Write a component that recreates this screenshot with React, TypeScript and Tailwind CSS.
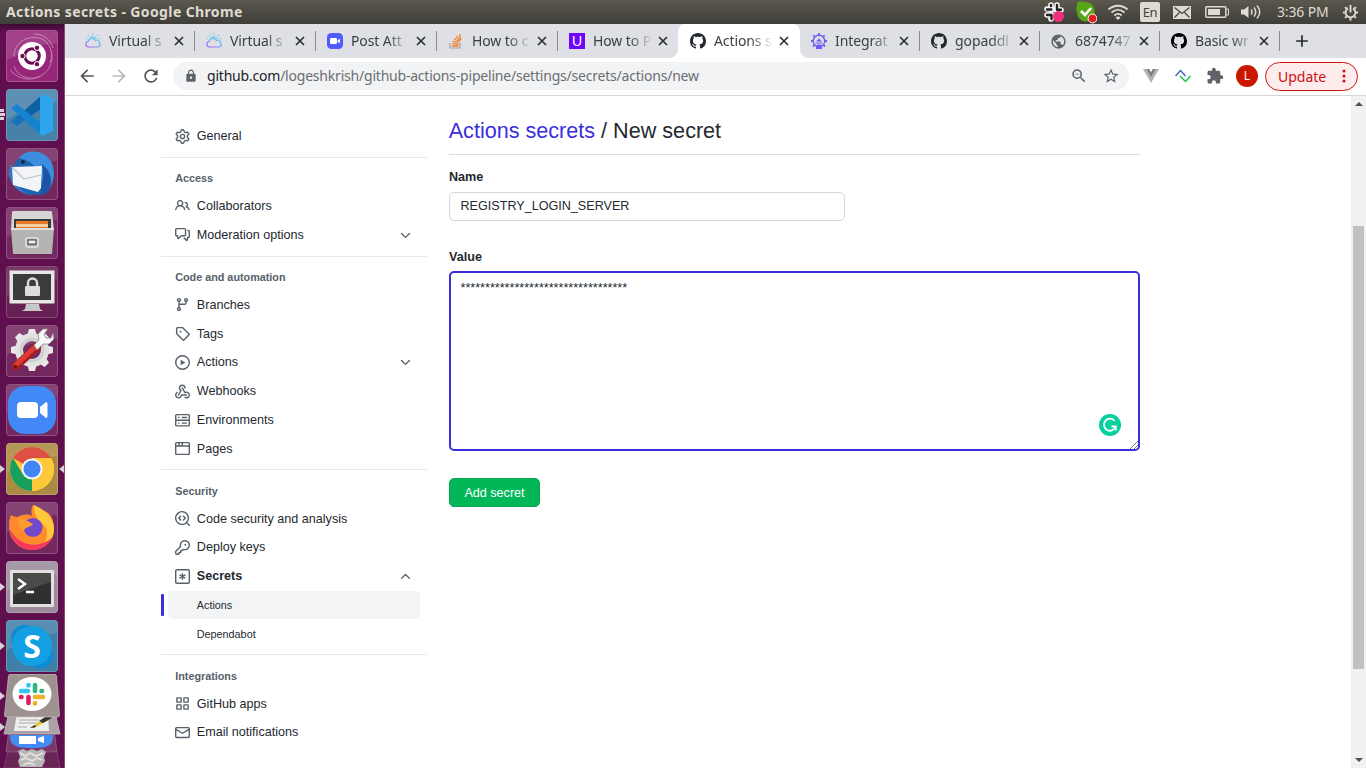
import type { ReactNode } from "react";
import {
  MdArrowBack,
  MdArrowForward,
  MdRefresh,
  MdLock,
  MdStarBorder,
  MdExtension,
  MdZoomOut,
  MdPublic,
  MdAdd,
} from "react-icons/md";

const octicons: Record<string, string> = {
  gear: "M8 0a8.2 8.2 0 0 1 .701.031C9.444.095 9.99.645 10.16 1.29l.288 1.107c.018.066.079.158.212.224.231.114.454.243.668.386.123.082.233.09.299.071l1.103-.303c.644-.176 1.392.021 1.82.63.27.385.506.792.704 1.218.315.675.111 1.422-.364 1.891l-.814.806c-.049.048-.098.147-.088.294.016.257.016.515 0 .772-.01.147.038.246.088.294l.814.806c.475.469.679 1.216.364 1.891a7.977 7.977 0 0 1-.704 1.217c-.428.61-1.176.807-1.82.63l-1.102-.302c-.067-.019-.177-.011-.3.071a5.909 5.909 0 0 1-.668.386c-.133.066-.194.158-.211.224l-.29 1.106c-.168.646-.715 1.196-1.458 1.26a8.006 8.006 0 0 1-1.402 0c-.743-.064-1.289-.614-1.458-1.26l-.289-1.106c-.018-.066-.079-.158-.212-.224a5.738 5.738 0 0 1-.668-.386c-.123-.082-.233-.09-.299-.071l-1.103.303c-.644.176-1.392-.021-1.82-.63a8.12 8.12 0 0 1-.704-1.218c-.315-.675-.111-1.422.363-1.891l.815-.806c.05-.048.098-.147.088-.294a6.214 6.214 0 0 1 0-.772c.01-.147-.038-.246-.088-.294l-.815-.806C.635 6.045.431 5.298.746 4.623a7.92 7.92 0 0 1 .704-1.217c.428-.61 1.176-.807 1.82-.63l1.102.302c.067.019.177.011.3-.071.214-.143.437-.272.668-.386.133-.066.194-.158.211-.224l.29-1.106C6.009.645 6.556.095 7.299.03 7.53.01 7.764 0 8 0Zm-.571 1.525c-.036.003-.108.036-.137.146l-.289 1.105c-.147.561-.549.967-.998 1.189-.173.086-.34.183-.5.29-.417.278-.97.423-1.529.27l-1.103-.303c-.109-.03-.175.016-.195.045-.22.312-.412.644-.573.99-.014.031-.021.11.059.19l.815.806c.411.406.562.957.53 1.456a4.709 4.709 0 0 0 0 .582c.032.499-.119 1.05-.53 1.456l-.815.806c-.081.08-.073.159-.059.19.162.346.353.677.573.989.02.03.085.076.195.046l1.102-.303c.56-.153 1.113-.008 1.53.27.161.107.328.204.501.29.447.222.85.629.997 1.189l.289 1.105c.029.109.101.143.137.146a6.6 6.6 0 0 0 1.142 0c.036-.003.108-.036.137-.146l.289-1.105c.147-.561.549-.967.998-1.189.173-.086.34-.183.5-.29.417-.278.97-.423 1.529-.27l1.103.303c.109.029.175-.016.195-.045.22-.313.411-.644.573-.99.014-.031.021-.11-.059-.19l-.815-.806c-.411-.406-.562-.957-.53-1.456a4.709 4.709 0 0 0 0-.582c-.032-.499.119-1.05.53-1.456l.815-.806c.081-.08.073-.159.059-.19a6.464 6.464 0 0 0-.573-.989c-.02-.03-.085-.076-.195-.046l-1.102.303c-.56.153-1.113.008-1.53-.27a4.44 4.44 0 0 0-.501-.29c-.447-.222-.85-.629-.997-1.189l-.289-1.105c-.029-.11-.101-.143-.137-.146a6.6 6.6 0 0 0-1.142 0ZM11 8a3 3 0 1 1-6 0 3 3 0 0 1 6 0ZM9.5 8a1.5 1.5 0 1 0-3.001.001A1.5 1.5 0 0 0 9.5 8Z",
  people:
    "M2 5.5a3.5 3.5 0 1 1 5.898 2.549 5.508 5.508 0 0 1 3.034 4.084.75.75 0 1 1-1.482.235 4 4 0 0 0-7.9 0 .75.75 0 0 1-1.482-.236A5.507 5.507 0 0 1 3.102 8.05 3.493 3.493 0 0 1 2 5.5ZM11 4a3.001 3.001 0 0 1 2.22 5.018 5.01 5.01 0 0 1 2.56 3.012.749.749 0 0 1-.885.954.752.752 0 0 1-.549-.514 3.507 3.507 0 0 0-2.522-2.372.75.75 0 0 1-.574-.73v-.352a.75.75 0 0 1 .416-.672A1.5 1.5 0 0 0 11 5.5.75.75 0 0 1 11 4Zm-5.5-.5a2 2 0 1 0-.001 3.999A2 2 0 0 0 5.5 3.5Z",
  discussion:
    "M1.75 1h8.5c.966 0 1.75.784 1.75 1.75v5.5A1.75 1.75 0 0 1 10.25 10H7.061l-2.574 2.573A1.458 1.458 0 0 1 2 11.543V10h-.25A1.75 1.75 0 0 1 0 8.25v-5.5C0 1.784.784 1 1.75 1ZM1.5 2.75v5.5c0 .138.112.25.25.25h1a.75.75 0 0 1 .75.75v2.19l2.72-2.72a.749.749 0 0 1 .53-.22h3.5a.25.25 0 0 0 .25-.25v-5.5a.25.25 0 0 0-.25-.25h-8.5a.25.25 0 0 0-.25.25Zm13 2a.25.25 0 0 0-.25-.25h-.5a.75.75 0 0 1 0-1.5h.5c.966 0 1.75.784 1.75 1.75v5.5A1.75 1.75 0 0 1 14.25 12H14v1.543a1.458 1.458 0 0 1-2.487 1.03L9.22 12.28a.749.749 0 0 1 .326-1.275.749.749 0 0 1 .734.215l2.22 2.22v-2.19a.75.75 0 0 1 .75-.75h1a.25.25 0 0 0 .25-.25Z",
  branch:
    "M9.5 3.25a2.25 2.25 0 1 1 3 2.122V6A2.5 2.5 0 0 1 10 8.5H6a1 1 0 0 0-1 1v1.128a2.251 2.251 0 1 1-1.5 0V5.372a2.25 2.25 0 1 1 1.5 0v1.836A2.493 2.493 0 0 1 6 7h4a1 1 0 0 0 1-1v-.628A2.25 2.25 0 0 1 9.5 3.25Zm-6 0a.75.75 0 1 0 1.5 0 .75.75 0 0 0-1.5 0Zm8.25-.75a.75.75 0 1 0 0 1.5.75.75 0 0 0 0-1.5ZM4.25 12a.75.75 0 1 0 0 1.5.75.75 0 0 0 0-1.5Z",
  tag: "M1 7.775V2.75C1 1.784 1.784 1 2.75 1h5.025c.464 0 .91.184 1.238.513l6.25 6.25a1.75 1.75 0 0 1 0 2.474l-5.026 5.026a1.75 1.75 0 0 1-2.474 0l-6.25-6.25A1.752 1.752 0 0 1 1 7.775Zm1.5 0c0 .066.026.13.073.177l6.25 6.25a.25.25 0 0 0 .354 0l5.025-5.025a.25.25 0 0 0 0-.354l-6.25-6.25a.25.25 0 0 0-.177-.073H2.75a.25.25 0 0 0-.25.25ZM6 5a1 1 0 1 1 0 2 1 1 0 0 1 0-2Z",
  play: "M8 0a8 8 0 1 1 0 16A8 8 0 0 1 8 0ZM1.5 8a6.5 6.5 0 1 0 13 0 6.5 6.5 0 0 0-13 0Zm4.879-2.773 4.264 2.559a.25.25 0 0 1 0 .428l-4.264 2.559A.25.25 0 0 1 6 10.559V5.442a.25.25 0 0 1 .379-.215Z",
  webhook:
    "M5.5 4.25a2.25 2.25 0 0 1 4.5 0 .75.75 0 0 0 1.5 0 3.75 3.75 0 1 0-6.14 2.889l-2.272 4.258a.75.75 0 0 0 1.324.706L7 7.25a.75.75 0 0 0-.309-1.015A2.25 2.25 0 0 1 5.5 4.25Z M7.364 3.607a.75.75 0 0 1 1.03.257l2.608 4.349a3.75 3.75 0 1 1-.628 6.785.75.75 0 0 1 .752-1.299 2.25 2.25 0 1 0-.033-3.88.75.75 0 0 1-1.03-.256L7.107 4.636a.75.75 0 0 1 .257-1.03Z M2.9 8.776A.75.75 0 0 1 2.625 9.8 2.25 2.25 0 1 0 6 11.75a.75.75 0 0 1 .75-.751h5.5a.75.75 0 0 1 0 1.5H7.425a3.751 3.751 0 1 1-5.55-3.998.75.75 0 0 1 1.024.274Z",
  server:
    "M1.75 1h12.5c.966 0 1.75.784 1.75 1.75v4c0 .372-.116.717-.314 1 .198.283.314.628.314 1v4a1.75 1.75 0 0 1-1.75 1.75H1.75A1.75 1.75 0 0 1 0 12.75v-4c0-.358.109-.707.314-1a1.739 1.739 0 0 1-.314-1v-4C0 1.784.784 1 1.75 1ZM1.5 2.75v4c0 .138.112.25.25.25h12.5a.25.25 0 0 0 .25-.25v-4a.25.25 0 0 0-.25-.25H1.75a.25.25 0 0 0-.25.25Zm.25 5.75a.25.25 0 0 0-.25.25v4c0 .138.112.25.25.25h12.5a.25.25 0 0 0 .25-.25v-4a.25.25 0 0 0-.25-.25ZM7 4.75A.75.75 0 0 1 7.75 4h4.5a.75.75 0 0 1 0 1.5h-4.5A.75.75 0 0 1 7 4.75ZM7.75 10h4.5a.75.75 0 0 1 0 1.5h-4.5a.75.75 0 0 1 0-1.5ZM3 4.75A.75.75 0 0 1 3.75 4h.5a.75.75 0 0 1 0 1.5h-.5A.75.75 0 0 1 3 4.75ZM3.75 10h.5a.75.75 0 0 1 0 1.5h-.5a.75.75 0 0 1 0-1.5Z",
  browser:
    "M0 2.75C0 1.784.784 1 1.75 1h12.5c.966 0 1.75.784 1.75 1.75v10.5A1.75 1.75 0 0 1 14.25 15H1.75A1.75 1.75 0 0 1 0 13.25ZM14.5 6h-13v7.25c0 .138.112.25.25.25h12.5a.25.25 0 0 0 .25-.25Zm-6-3.5v2h6V2.75a.25.25 0 0 0-.25-.25ZM5 2.5v2h2v-2Zm-3.25 0a.25.25 0 0 0-.25.25V4.5h2v-2Z",
  codescan:
    "M8.47 4.97a.75.75 0 0 0 0 1.06L9.94 7.5 8.47 8.97a.75.75 0 1 0 1.06 1.06l2-2a.75.75 0 0 0 0-1.06l-2-2a.75.75 0 0 0-1.06 0ZM6.53 6.03a.75.75 0 0 0-1.06-1.06l-2 2a.75.75 0 0 0 0 1.06l2 2a.75.75 0 1 0 1.06-1.06L5.06 7.5l1.47-1.47Z M12.246 13.307a7.501 7.501 0 1 1 1.06-1.06l2.474 2.473a.749.749 0 1 1-1.06 1.06ZM1.5 7.5a6.002 6.002 0 0 0 3.608 5.504 6.002 6.002 0 0 0 6.486-1.117.748.748 0 0 1 .292-.293A6 6 0 1 0 1.5 7.5Z",
  key: "M10.5 0a5.499 5.499 0 1 1-1.288 10.848l-.932.932a.749.749 0 0 1-.53.22H7v.75a.749.749 0 0 1-.22.53l-.5.5a.749.749 0 0 1-.53.22H5v.75a.749.749 0 0 1-.22.53l-.5.5a.749.749 0 0 1-.53.22h-2A1.75 1.75 0 0 1 0 14.25v-2c0-.199.079-.389.22-.53l4.932-4.932A5.5 5.5 0 0 1 10.5 0Zm-4 5.5c-.001.431.069.86.205 1.269a.75.75 0 0 1-.181.768L1.5 12.56v1.69c0 .138.112.25.25.25h1.69l.06-.06v-1.19a.75.75 0 0 1 .75-.75h1.19l.06-.06v-1.19a.75.75 0 0 1 .75-.75h1.19l1.023-1.025a.75.75 0 0 1 .768-.18A4 4 0 1 0 6.5 5.5ZM11 6a1 1 0 1 1 0-2 1 1 0 0 1 0 2Z",
  mail: "M1.75 2h12.5c.966 0 1.75.784 1.75 1.75v8.5A1.75 1.75 0 0 1 14.25 14H1.75A1.75 1.75 0 0 1 0 12.25v-8.5C0 2.784.784 2 1.75 2ZM1.5 12.251c0 .138.112.25.25.25h12.5a.25.25 0 0 0 .25-.25V5.809L8.38 9.397a.75.75 0 0 1-.76 0L1.5 5.809v6.442Zm13-8.181v-.32a.25.25 0 0 0-.25-.25H1.75a.25.25 0 0 0-.25.25v.32L8 7.88Z",
  down: "M12.78 5.22a.749.749 0 0 1 0 1.06l-4.25 4.25a.749.749 0 0 1-1.06 0L3.22 6.28a.749.749 0 1 1 1.06-1.06L8 8.939l3.72-3.719a.749.749 0 0 1 1.06 0Z",
  up: "M3.22 10.53a.749.749 0 0 1 0-1.06l4.25-4.25a.749.749 0 0 1 1.06 0l4.25 4.25a.749.749 0 1 1-1.06 1.06L8 6.811 4.28 10.53a.749.749 0 0 1-1.06 0Z",
};

function Octicon({ name }: { name: string }) {
  return (
    <svg viewBox="0 0 16 16" className="size-[15px] shrink-0 fill-[#57606a]">
      {name === "asterisk" ? (
        <g fill="none" stroke="#57606a" strokeWidth="1.5" strokeLinecap="round">
          <rect x=".75" y=".75" width="14.5" height="14.5" rx="1.2" />
          <path d="M8 5v6M5.4 6.5l5.2 3M10.6 6.5l-5.2 3" />
        </g>
      ) : name === "apps" ? (
        <g fill="none" stroke="#57606a" strokeWidth="1.5">
          <rect x="2" y="2" width="4.500" height="4.500" rx=".5" />
          <rect x="9.500" y="2" width="4.500" height="4.500" rx=".5" />
          <rect x="2" y="9.500" width="4.500" height="4.500" rx=".5" />
          <rect x="9.500" y="9.500" width="4.500" height="4.500" rx=".5" />
        </g>
      ) : (
        <path d={octicons[name]} />
      )}
    </svg>
  );
}

/* ---------- Desktop panel ---------- */

function TopPanel() {
  return (
    <header className="flex h-6 shrink-0 items-center bg-linear-to-b from-[#5b584d] to-[#3e3d38] pr-[7px] pl-[6px] font-['Noto_Sans',sans-serif] text-[#dfdbd2]">
      <span className="text-[14px] font-bold leading-6 tracking-[0.38px]">Actions secrets - Google Chrome</span>
      <div className="ml-auto flex items-center">
        <svg viewBox="0 0 22 22" className="mr-2.5 size-[22px]">
          <g strokeLinecap="round" strokeWidth="5.6" stroke="#f4f4f4">
            <path d="M8 4v5M14 4v4M4 8h5M13 9h5M4 14h5M8 14v4M14 13v4" />
          </g>
          <g strokeLinecap="round" strokeWidth="2.4" stroke="#222">
            <path d="M8 4v1M14 4v4M4 8.500h4.300M14 8.800h4M4 14h4M8.500 14v4" />
          </g>
          <circle cx="15.500" cy="15.500" r="5.500" fill="#ef2f7b" />
        </svg>
        <svg viewBox="0 0 22 24" className="mr-2.5 h-6 w-[22px]">
          <path d="M2 6C1 2 5 0 8 2c5-1 10 2 11 6 1 3 0 4 1 6 2 5-2 9-6 7C7 23 2 18 2 12c-1-2-1-4 0-6Z" fill="#57a515" />
          <path d="m6 11 4 4 6-7" fill="none" stroke="#fff" strokeWidth="2.600" />
          <circle cx="17.500" cy="18.500" r="4.400" fill="#e11c1c" stroke="#fff" strokeWidth="1" />
        </svg>
        <svg viewBox="0 0 22 18" className="mr-[11px] h-[18px] w-[22px]" fill="none" stroke="#dfdbd2" strokeWidth="1.800">
          <path d="M1.500 6.500c5.500-5 13.500-5 19 0" />
          <path d="M4.500 9.500c4-3.600 9-3.600 13 0" />
          <path d="M7.300 12.500c2.300-2 5.100-2 7.400 0" />
          <path d="m11 17-2.500-2.600c1.500-1.300 3.500-1.300 5 0Z" fill="#dfdbd2" stroke="none" />
        </svg>
        <span className="mr-[13px] flex h-5 w-5 items-center justify-center rounded-[2px] bg-[#dfdbd2] pt-px text-[13px] tracking-[-0.3px] text-[#45443f]">
          En
        </span>
        <svg viewBox="0 0 18 13" className="mr-[14px] h-[13px] w-[18px]">
          <rect width="18" height="13" fill="#dfdbd2" />
          <path d="m1.500 1.500 7.500 6 7.500-6M1.500 11.500l5-5M16.500 11.500l-5-5" fill="none" stroke="#45443f" strokeWidth="1.300" />
        </svg>
        <svg viewBox="0 0 24 12" className="mr-3 h-3 w-6">
          <rect x=".8" y=".8" width="20" height="10.400" rx="1" fill="none" stroke="#dfdbd2" strokeWidth="1.500" />
          <rect x="3" y="3" width="12" height="6" fill="#dfdbd2" />
          <path d="M21.500 3h2v6h-2" fill="none" stroke="#dfdbd2" />
        </svg>
        <svg viewBox="0 0 20 16" className="mr-4 h-4 w-5">
          <path d="M0 5.500h3L7.500 2v12L3 10.500H0Z" fill="#dfdbd2" />
          <path d="M10 5.500q2 2.500 0 5M13 3.500q3.500 4.500 0 9M16 1.500q5.500 6.500 0 13" fill="none" stroke="#dfdbd2" strokeWidth="1.500" />
        </svg>
        <span className="mr-3 w-[53px] whitespace-nowrap text-[14px] leading-6 tracking-[-0.15px]">3:36 PM</span>
        <svg viewBox="0 0 18 18" className="size-[17px]" fill="none" stroke="#dfdbd2">
          <path d="M6.300 4.600a5.200 5.200 0 1 0 5.400 0" strokeWidth="2" />
          <path d="M9 1v8" strokeWidth="2" />
          <path d="M1 9h2M15 9h2M3.300 3.300l1.500 1.500M14.700 3.300l-1.500 1.500M3.300 14.700l1.500-1.500M14.700 14.700l-1.500-1.500M9 15v2.500" strokeWidth="2.200" />
        </svg>
      </div>
    </header>
  );
}

/* ---------- Launcher ---------- */

function Tile({ tint, pips, focused, children }: { tint: string; pips?: number; focused?: boolean; children: ReactNode }) {
  return (
    <div className="relative mb-[7px] flex h-[52px] w-[65px] shrink-0 pl-[6px]">
      <div className={`h-[52px] w-[52px] overflow-hidden rounded-[4px] border border-white/20 ${tint}`}>
        <svg viewBox="1 1 50 50" className="size-[50px]">
          <path d="M1 1h50v12Q26 15 1 30Z" fill="#fff" opacity=".12" />
          {children}
        </svg>
      </div>
      {pips === 1 && <span className="absolute top-[22px] left-0 border-y-4 border-l-[5px] border-y-transparent border-l-[#d9cfd6]" />}
      {pips === 3 && (
        <span className="absolute top-[20px] left-0 flex flex-col gap-px">
          <i className="h-[3px] w-[4px] bg-[#d9cfd6]" />
          <i className="h-[3px] w-[5px] bg-[#d9cfd6]" />
          <i className="h-[3px] w-[4px] bg-[#d9cfd6]" />
        </span>
      )}
      {focused && <span className="absolute top-[22px] right-px border-y-4 border-r-[5px] border-y-transparent border-r-[#d9cfd6]" />}
    </div>
  );
}

function Launcher() {
  const teeth = [0, 45, 90, 135, 180, 225, 270, 315];
  return (
    <aside className="flex w-[65px] shrink-0 flex-col overflow-hidden border-r border-[#8b4a7a] bg-linear-to-b from-[#3d0a31] from-0% via-[#5f0f4d] via-1% to-[#5f0f4d] pt-[6px]">
      <Tile tint="bg-[#962779]">
        <g fill="none" stroke="#fff" opacity=".4">
          <path d="M8 27C8 12 22 4 36 9c8 4 12 14 8 24" />
          <path d="M45 20c4 12-4 26-16 28C19 49 11 45 8 36" />
          <path d="M28 4c10 0 17 6 19 14M4 40c8 9 20 12 30 6" />
        </g>
        <circle cx="26" cy="26" r="14" fill="#fff" />
        <circle cx="26" cy="26" r="7.300" fill="none" stroke="#6d0d4f" strokeWidth="3" />
        <g fill="#6d0d4f" stroke="#fff" strokeWidth="1">
          <circle cx="16.500" cy="26" r="2.700" />
          <circle cx="31" cy="17.800" r="2.700" />
          <circle cx="31" cy="34.200" r="2.700" />
        </g>
      </Tile>
      <Tile tint="bg-[#4781a8]" pips={3}>
        <path d="m5 33 31-27 2 12L11 36Z" fill="#0c62a3" />
        <path d="m5 19 6-4 27 22-2 10Z" fill="#1683cf" />
        <path d="m5 33 6 4 7-6-6-5Z" fill="#1374bb" />
        <path d="M36 5 47 10v32l-11 5-2-2V7Z" fill="#2ea3ee" />
      </Tile>
      <Tile tint="bg-[#73295f]">
        <circle cx="27" cy="26" r="21" fill="#1d62b3" />
        <path d="M13 10C20 0 38 2 44 12c6 9 5 22-2 31l-8 4c6-8 3-20-4-27C25 13 18 11 13 10Z" fill="#3c8de0" />
        <path d="M4 17c-4 12 3 24 14 28l8 3C11 42 5 28 6 17Z" fill="#2f78cb" />
        <path d="m6 19 30-1-1 22-3 4-25-7Z" fill="#f3f4f6" />
        <path d="m6 19 12 12 17-4" fill="none" stroke="#bfc4cc" strokeWidth="1.200" />
        <path d="M36 16c11 9 11 20 5 29l-8 3c4-9 5-20 3-32Z" fill="#1d55a5" />
        <circle cx="17" cy="14" r="2" fill="#1b2b3c" />
      </Tile>
      <Tile tint="bg-[#73295f]">
        <path d="M6 5q0-1 2-1h36q2 0 2 1l2 18H5Z" fill="#d6d6d4" />
        <rect x="8" y="12" width="37" height="10" fill="#3a3a38" />
        <path d="M10 14h32v8H10Z" fill="#e7792a" />
        <path d="M10 17h32v3H10Z" fill="#f4d0a1" />
        <path d="M5 21h43l-2 26H7Z" fill="#b4b4b2" />
        <path d="M5 21h43v2H5Z" fill="#dededc" />
        <rect x="20" y="31" width="12" height="9" rx="2" fill="#a0a09e" stroke="#e4e4e2" strokeWidth="1.500" />
        <rect x="22" y="33" width="8" height="4" fill="#ededeb" stroke="#444" strokeWidth="1" />
      </Tile>
      <Tile tint="bg-[#662054]">
        <rect x="3.500" y="4.500" width="45" height="33" fill="#e6e6e4" />
        <rect x="7" y="8" width="38" height="26" fill="#3b3b3b" />
        <path d="M20 38h13l1 5 3 2H16l3-2Z" fill="#c7c7c5" />
        <rect x="19" y="20" width="15" height="10" rx="1" fill="#dcdcda" />
        <path d="M22 21v-4a4.500 4.500 0 0 1 9 0v4" fill="none" stroke="#dcdcda" strokeWidth="2.400" />
      </Tile>
      <Tile tint="bg-[#73295f]">
        <g fill="#e9e9e9">
          {teeth.map((a) => (
            <path key={a} d="m21.500 10 1.500-6h6l1.500 6Z" transform={`rotate(${a} 26 25)`} />
          ))}
        </g>
        <circle cx="26" cy="25" r="13" fill="none" stroke="#e2e2e2" strokeWidth="8" />
        <circle cx="26" cy="25" r="11" fill="none" stroke="#cfcfcf" strokeWidth="3" />
        <path d="m10 41 21-19" stroke="#a81d1d" strokeWidth="8" strokeLinecap="round" />
        <path d="m10 40 20-19" stroke="#dc3c36" strokeWidth="5" strokeLinecap="round" />
        <path d="m28 20 5-5-1-6 5-5 5 0-4 5 2 4 5 0 2-5 1 6-5 5-6 0-6 6Z" fill="#f8f8f8" stroke="#888" strokeWidth=".8" />
        <circle cx="9.500" cy="41.500" r="1.800" fill="#6e1414" />
      </Tile>
      <Tile tint="bg-[#73295f]">
        <rect x="2" y="2" width="48" height="48" rx="17" fill="#4288f6" />
        <rect x="11" y="18" width="21" height="16" rx="4" fill="#fff" />
        <path d="m34 23 6-5q1.500 0 1.500 2v12q0 2-1.500 2l-6-5Z" fill="#fff" />
      </Tile>
      <Tile tint="bg-[#ab8a43]" pips={1} focused>
        <circle cx="26" cy="26" r="22" fill="#fdc93a" />
        <path d="M26 26 6.950 15A22 22 0 0 1 45.050 15H26Z" fill="#dd5144" />
        <path d="M26 26 26 48A22 22 0 0 1 6.950 15L17 31.500Z" fill="#17a05d" />
        <path d="M26 26 35.500 31.500 26 48A22 22 0 0 0 45.050 15H26Z" fill="#fdc93a" />
        <circle cx="26" cy="26" r="10.500" fill="#f3f3f3" />
        <circle cx="26" cy="26" r="8.500" fill="#4385f3" />
      </Tile>
      <Tile tint="bg-[#73295f]">
        <path d="M5 13C2 20 3 29 5 34c4 9 12 14 21 14 12 0 22-9 22-21 0-9-3-14-7-17-6-2-10-4-14-7-2 4-2 7-1 11-5-3-11-1-14 1-3 0-5-1-7-2Z" fill="#ff8a2c" />
        <path d="M28 3c9 4 20 11 20 24 0 12-9 19-20 19 12-2 15-12 12-20-2-5-13-8-12-23Z" fill="#ffc93c" />
        <path d="M4 27C6 43 17 48 27 48c9 0 17-6 19-13-9 10-31 13-42-8Z" fill="#f8385c" />
        <circle cx="27" cy="25.500" r="9.500" fill="#7248cc" />
        <path d="M12 15c4 3 8 2 15 7-3 4-8 2-9 7-4-2-7-8-6-14Z" fill="#ff9c2e" />
      </Tile>
      <Tile tint="bg-[#9d8b9b]" pips={1}>
        <rect x="4" y="9" width="44" height="37" rx="1" fill="#e1e1df" />
        <rect x="7" y="12" width="38" height="31" fill="#302f31" />
        <path d="M7 12h38v9L7 34Z" fill="#4b4a4b" />
        <path d="m12 18 7 5-7 5M20 31h8" fill="none" stroke="#fff" strokeWidth="2.400" />
      </Tile>
      <Tile tint="bg-[#407fa8]" pips={1}>
        <circle cx="19" cy="19" r="14" fill="#0d8bd3" />
        <circle cx="34" cy="35" r="13.500" fill="#0d8bd3" />
        <circle cx="26" cy="26" r="20" fill="#149fe3" />
        <text x="26" y="37.500" textAnchor="middle" fill="#fff" className="font-['Noto_Sans',sans-serif] text-[32px] font-bold">
          S
        </text>
      </Tile>
      <svg viewBox="0 674 64 94" className="-mt-[5px] h-[94px] w-16 shrink-0">
        <path d="M9 730h45l3 22H6Z" fill="#7b3769" stroke="#a0708f" strokeWidth=".7" />
        <path d="M10 735h43c1 12-8 13-21 13s-23-1-22-13Z" fill="#438cf3" />
        <path d="M19 736h17v8H19ZM38 738l6-2v7l-6-2Z" fill="#fff" />
        <path d="M8 752h49l3 16H4Z" fill="#692456" stroke="#8d4d7d" strokeWidth=".7" />
        <path d="m18 751 5-2 4 2 5-2 5 2 5-2 4 3-2 5 1 4-3 6H20l-2-6 2-4Z" fill="#b9b8b6" />
        <path d="m20 753 5 3 5-3 6 3 7-3M21 760l5-2 6 3 5-3 5 2M23 765l6-2 6 2" fill="none" stroke="#e4e4e2" strokeWidth="1.800" />
        <path d="M9 712h46l5 22H4Z" fill="#aaa0a5" stroke="#d0c7cc" strokeWidth=".7" />
        <path d="M17 712h31l1 19H14Z" fill="#eee" />
        <path d="M19 720h20M19 723h18M18 727h9" stroke="#aaa" />
        <path d="m30 728 16-11 5 2-17 9Z" fill="#e4c339" />
        <path d="m39 721 9-6 4 3-9 5Z" fill="#333" />
        <path d="m30 728 5-3 1 2Z" fill="#222" />
        <path d="M11 674h43q2 0 2.500 2l3 39q0 2-2 2H7q-3 0-2.500-2l4-39q.5-2 2.500-2Z" fill="#9d9290" stroke="#c9c1c0" strokeWidth=".7" />
        <ellipse cx="32" cy="694" rx="19.500" ry="17" fill="#fff" />
        <g strokeWidth="4.600" strokeLinecap="round">
          <path d="M21 691h7M28.500 685v.5" stroke="#36c5f0" />
          <path d="M35 685v6M41.500 691h.5" stroke="#2eb67d" />
          <path d="M35 697h8M35 703v.5" stroke="#ecb22e" />
          <path d="M28.500 697v6M21 697h.5" stroke="#e01e5a" />
        </g>
        <path d="m0 692 5 4-5 4ZM0 723l5 4-5 4Z" fill="#d9cfd6" />
      </svg>
    </aside>
  );
}

/* ---------- Browser ---------- */

function Cloud() {
  return (
    <svg viewBox="0 0 16 16" className="size-4" fill="none" strokeWidth="1.200">
      <defs>
        <linearGradient id="cloud" x1="0" y1="1" x2="1" y2="0">
          <stop offset="0" stopColor="#b455f5" />
          <stop offset=".5" stopColor="#6fa4fb" />
          <stop offset="1" stopColor="#53d5e8" />
        </linearGradient>
      </defs>
      <path d="M3.500 14A2.800 2.800 0 0 1 3 8.500C4 5 9 4 10.500 7.500 13 6 15 8.500 14 10c2 1 1.500 4-1 4Z" stroke="url(#cloud)" />
      <path d="M4.500 5.500a4 4 0 0 1 7 .5M8 0v1.500M3 2l1 1.200M13 2l-1 1.200M.8 5.500l1.500.5M15.200 5.500l-1.500.5" stroke="#6bd3ef" />
    </svg>
  );
}

function GithubMark({ tone }: { tone: string }) {
  return (
    <svg viewBox="0 0 16 16" className={`size-4 ${tone}`}>
      <path d="M8 0c4.420 0 8 3.580 8 8a8.013 8.013 0 0 1-5.450 7.590c-.4.080-.55-.17-.55-.38 0-.27.010-1.130.010-2.200 0-.75-.25-1.230-.54-1.480 1.780-.2 3.650-.88 3.650-3.950 0-.88-.31-1.590-.82-2.150.080-.2.360-1.020-.080-2.120 0 0-.67-.22-2.200.82-.64-.18-1.320-.27-2-.27-.68 0-1.360.090-2 .27-1.530-1.030-2.200-.82-2.200-.82-.44 1.100-.16 1.920-.080 2.120-.51.560-.82 1.280-.82 2.150 0 3.060 1.860 3.750 3.640 3.950-.23.200-.44.550-.51 1.070-.46.210-1.610.550-2.330-.66-.15-.24-.6-.83-1.230-.82-.67.010-.27.380.010.530.340.190.730.900.820 1.130.160.450.680 1.310 2.690.94 0 .67.010 1.300.010 1.490 0 .21-.15.450-.55.380A7.995 7.995 0 0 1 0 8c0-4.420 3.580-8 8-8Z" />
    </svg>
  );
}

function Helm() {
  return (
    <svg viewBox="0 0 16 16" className="size-4" fill="none" stroke="#6f5bf5">
      <circle cx="8" cy="8" r="5.800" strokeWidth="1.400" />
      <path d="M8 0v2M2.300 2.300l1.400 1.400M13.700 2.300l-1.400 1.400M0 8h2M14 8h2M1.800 13.500l1.700-1.200M14.200 13.500l-1.700-1.200" strokeWidth="1.800" />
      <path d="M5 16v-3q3-3.500 6 0v3ZM5 8.500h6L8 5.500Z" fill="#6f5bf5" stroke="none" />
      <path d="M4.500 10h7" strokeWidth="1" />
    </svg>
  );
}

const tabs: { title: string; icon: ReactNode; active?: boolean }[] = [
  { title: "Virtual s", icon: <Cloud /> },
  { title: "Virtual s", icon: <Cloud /> },
  {
    title: "Post Att",
    icon: (
      <svg viewBox="0 0 16 16" className="size-4">
        <rect width="16" height="16" rx="4.500" fill="#4f5bff" />
        <rect x="3" y="5" width="7" height="6" rx="1.300" fill="#fff" />
        <path d="m10.700 7.300 2.300-1.600v4.600l-2.300-1.600Z" fill="#fff" />
      </svg>
    ),
  },
  {
    title: "How to c",
    icon: (
      <svg viewBox="0 0 16 16" className="size-4" fill="none">
        <path d="M2 10v5h10v-5" stroke="#a0a3a6" strokeWidth="1.200" />
        <path d="M4 13h6.500M4.200 10.700l6.300.6M4.800 8.200l6 1.800M6 5.500l5.400 3.300M8.300 3l4 5M11.500 1l1.300 6" stroke="#f48024" strokeWidth="1.300" />
      </svg>
    ),
  },
  {
    title: "How to P",
    icon: (
      <span className="flex size-4 items-center justify-center bg-[#6f05fb] font-['Liberation_Sans',sans-serif] text-[14px] leading-4 text-white">U</span>
    ),
  },
  { title: "Actions s", icon: <GithubMark tone="fill-[#24292e]" />, active: true },
  { title: "Integrat", icon: <Helm /> },
  { title: "gopaddl", icon: <GithubMark tone="fill-[#24292e]" /> },
  { title: "6874747", icon: <MdPublic className="-ml-px size-[17px] text-[#5f6368]" /> },
  { title: "Basic wr", icon: <GithubMark tone="fill-black" /> },
];

function TabStrip() {
  return (
    <div className="flex h-[34px] shrink-0 bg-[#dee0e6] pl-[9px] font-['Noto_Sans',sans-serif]">
      {tabs.map((tab, i) => (
        <div key={i} className={`relative flex h-[34px] shrink-0 items-center pl-[11px] ${i < 6 ? "w-[121px]" : "w-[120px]"}`}>
          {tab.active && (
            <>
              <span className="absolute inset-y-0 right-0 -left-px rounded-t-[7px] bg-white" />
              <span className="absolute bottom-0 -left-[9px] size-2 bg-[radial-gradient(circle_at_0_0,#dee0e6_7.500px,#fff_8px)]" />
              <span className="absolute -right-2 bottom-0 size-2 bg-[radial-gradient(circle_at_100%_0,#dee0e6_7.500px,#fff_8px)]" />
            </>
          )}
          <span className="relative w-4 shrink-0">{tab.icon}</span>
          <span className="relative ml-2 w-[60px] shrink-0 whitespace-nowrap mask-r-from-60% mask-r-to-100% text-[14px] leading-5 tracking-[-0.1px] text-[#3c4043]">
            {tab.title}
          </span>
          <svg
            viewBox="0 0 14 14"
            className={`relative size-[14px] shrink-0 ${i < 6 ? "ml-[3px]" : "ml-[2px]"}`}
            fill="none"
            stroke="#2c2f33"
            strokeWidth="1.700"
          >
            <path d="m3 3 8 8M11 3l-8 8" />
          </svg>
          {i !== 4 && i !== 5 && <span className="absolute right-0 bottom-[7px] h-5 w-px bg-[#8b8d92]" />}
        </div>
      ))}
      <MdAdd className="mt-[7px] ml-[12px] size-5 text-[#26292c]" />
    </div>
  );
}

function Toolbar() {
  return (
    <div className="flex h-[38px] shrink-0 items-center border-b border-[#d5d7da] bg-white pr-2 pb-px pl-3 font-['Noto_Sans',sans-serif]">
      <MdArrowBack className="size-5 text-[#54575b]" />
      <MdArrowForward className="ml-3 size-5 text-[#b9bbbe]" />
      <MdRefresh className="ml-3 size-5 text-[#54575b]" />
      <div className="ml-3 flex h-7 w-[956px] items-center rounded-full bg-[#f1f3f4] pr-[9px] pl-[11px]">
        <MdLock className="size-[14px] text-[#5f6368]" />
        <span className="ml-[9px] whitespace-nowrap text-[14px] leading-5 tracking-[-0.21px] text-[#6b6e72]">
          <span className="text-[#202124]">github.com</span>/logeshkrish/github-actions-pipeline/settings/secrets/actions/new
        </span>
        <MdZoomOut className="ml-auto size-[18px] text-[#5f6368]" />
        <MdStarBorder className="ml-[14px] size-[18px] text-[#5f6368]" />
      </div>
      <svg viewBox="0 0 16 14" className="ml-[14px] h-[14px] w-4">
        <path d="M0 0h3.200L8 8.500 12.800 0H16L8 14Z" fill="#b2b2b2" />
        <path d="M3.200 0h3L8 3.200 9.800 0h3L8 8.500Z" fill="#7e7e7e" />
      </svg>
      <svg viewBox="0 0 16 14" className="ml-4 h-[14px] w-4" fill="none" strokeWidth="1.500">
        <path d="m.5 7 5-5.500L10.500 7" stroke="#3d66b5" />
        <path d="m5 7 5.500 5.500L15.500 7" stroke="#16c94a" />
      </svg>
      <MdExtension className="ml-[15px] size-[18px] text-[#5f6368]" />
      <span className="ml-3 flex size-[22px] items-center justify-center rounded-full bg-[#cc1700] font-['Open_Sans',sans-serif] text-[12px] text-white">L</span>
      <div className="ml-[7px] flex h-[29px] w-[93px] items-center rounded-full border border-[#d01414] bg-[#fdecec] pl-3 text-[14px] text-[#cf1010]">
        Update
        <svg viewBox="0 0 4 14" className="ml-auto mr-[11px] h-[14px] w-1" fill="#cf1010">
          <circle cx="2" cy="2" r="1.500" />
          <circle cx="2" cy="7" r="1.500" />
          <circle cx="2" cy="12" r="1.500" />
        </svg>
      </div>
    </div>
  );
}

/* ---------- Settings page ---------- */

function Item({ icon, label, chevron, bold }: { icon: string; label: string; chevron?: string; bold?: boolean }) {
  return (
    <li className="flex h-[28.8px] items-center pr-[14px] pl-[14px]">
      <Octicon name={icon} />
      <span className={`ml-[6.800px] text-[12.6px] leading-[18px] ${bold ? "font-bold" : ""}`}>{label}</span>
      {chevron && (
        <span className={`ml-auto ${chevron === "down" ? "pt-px" : ""}`}>
          <Octicon name={chevron} />
        </span>
      )}
    </li>
  );
}

function Group({ title, height, heading, children }: { title: string; height: string; heading: string; children: ReactNode }) {
  return (
    <section className={`shrink-0 border-t border-[#e6e8ee] ${height}`}>
      <h2 className={`pl-[14.200px] text-[10.8px] leading-[17px] font-bold text-[#57606a] ${heading}`}>{title}</h2>
      <ul>{children}</ul>
    </section>
  );
}

function Sidebar() {
  return (
    <nav className="flex w-[266px] shrink-0 flex-col pt-[26px]">
      <ul className="h-[35px]">
        <Item icon="gear" label="General" />
      </ul>
      <Group title="Access" height="h-[99px]" heading="h-[33.5px] pt-3">
        <Item icon="people" label="Collaborators" />
        <Item icon="discussion" label="Moderation options" chevron="down" />
      </Group>
      <Group title="Code and automation" height="h-[213px]" heading="h-[33.5px] pt-3">
        <Item icon="branch" label="Branches" />
        <Item icon="tag" label="Tags" />
        <Item icon="play" label="Actions" chevron="down" />
        <Item icon="webhook" label="Webhooks" />
        <Item icon="server" label="Environments" />
        <Item icon="browser" label="Pages" />
      </Group>
      <Group title="Security" height="h-[185px]" heading="h-[34.15px] pt-[13px]">
        <Item icon="codescan" label="Code security and analysis" />
        <Item icon="key" label="Deploy keys" />
        <Item icon="asterisk" label="Secrets" chevron="up" bold />
        <li className="relative mx-[7px] flex h-7 items-center rounded-[5px] bg-[#f3f4f6] pt-[1.5px] pl-[28.800px] text-[10.8px]">
          <span className="absolute top-[3px] -left-[7px] h-[22px] w-[3px] rounded-[1px] bg-[#3b2edc]" />
          Actions
        </li>
        <li className="mx-[7px] flex h-[30px] items-center pt-[1.5px] pl-[28.800px] text-[10.8px]">Dependabot</li>
      </Group>
      <Group title="Integrations" height="h-[110px]" heading="h-[34.15px] pt-[13px]">
        <Item icon="apps" label="GitHub apps" />
        <Item icon="mail" label="Email notifications" />
      </Group>
    </nav>
  );
}

function SecretForm() {
  return (
    <main className="ml-[22px] w-[691px] shrink-0 pt-[18px]">
      <h1 className="-ml-[0.3px] h-[41px] border-b border-[#d8dee4] text-[21.6px] leading-[33px]">
        <a className="text-[#3b2edc]">Actions secrets</a> / New secret
      </h1>
      <label className="mt-[13px] block text-[12.6px] leading-[18px] font-bold">Name</label>
      <div className="mt-[6px] flex h-[29px] w-[396px] items-center rounded-[5px] border border-[#d0d7de] px-[10.500px] text-[12.6px]">
        <span className="-mt-px">REGISTRY_LOGIN_SERVER</span>
      </div>
      <label className="mt-[27px] block text-[12.6px] leading-[18px] font-bold">Value</label>
      <div className="relative mt-[5px] h-[180px] rounded-[5px] border-2 border-[#3b2edc] px-[9.500px] pt-[6px] text-[12.6px] leading-[19px]">
        {"*".repeat(34)}
        <svg viewBox="0 0 22 22" className="absolute right-[17px] bottom-[13px] size-[22px]">
          <circle cx="11" cy="11" r="11" fill="#06d0a0" />
          <path d="M15.700 7A6 6 0 1 0 16.700 12.500H12.500M16.800 12v4.500" fill="none" stroke="#fff" strokeWidth="1.800" />
        </svg>
        <svg viewBox="0 0 8 8" className="absolute right-0 bottom-0 size-2" stroke="#555" strokeWidth=".8">
          <path d="m0 8 8-8M4 8l4-4" />
        </svg>
      </div>
      <button className="mt-[27px] block h-[29px] w-[91px] rounded-[5px] border border-[#08a950] bg-[#02b757] text-[12.6px] leading-[26px] text-white">
        Add secret
      </button>
    </main>
  );
}

function Scrollbar() {
  return (
    <div className="ml-auto flex w-[15px] shrink-0 flex-col items-center bg-[#f1f1f1]">
      <span className="mt-[6px] border-x-4 border-b-4 border-x-transparent border-b-[#505050]" />
      <span className="mt-[120px] h-[443px] w-[11px] bg-[#c1c1c1]" />
      <span className="mt-auto mb-[6px] border-x-4 border-t-4 border-x-transparent border-t-[#505050]" />
    </div>
  );
}

export default function App() {
  return (
    <div className="flex h-[768px] w-[1366px] flex-col overflow-hidden bg-white">
      <TopPanel />
      <div className="flex min-h-0 flex-1">
        <Launcher />
        <div className="flex min-w-0 flex-1 flex-col">
          <TabStrip />
          <Toolbar />
          <div className="flex min-h-0 flex-1 pl-24 font-['Liberation_Sans',Arial,sans-serif] text-[#24292f]">
            <Sidebar />
            <SecretForm />
            <Scrollbar />
          </div>
        </div>
      </div>
    </div>
  );
}
